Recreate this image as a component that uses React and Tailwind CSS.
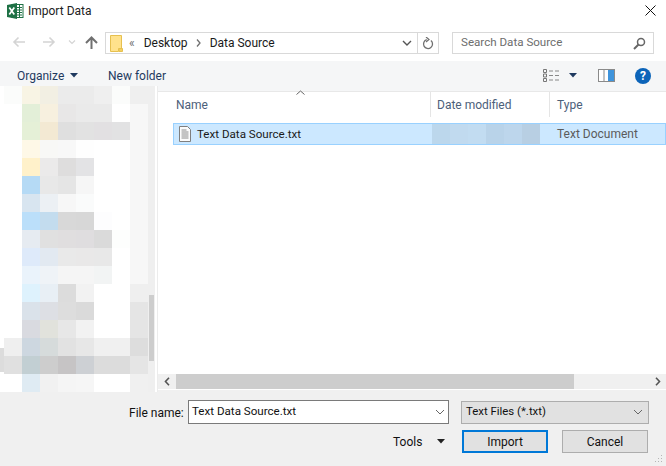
import React from "react";

const W = "#ffffff", F = "#f7f7f7";
const rows = [
  ["#fbfcfb","#f8f4e4","#f2efe3","#ebebeb","#ebebeb","#efefef","#fbfcfb","#efefef"],
  [W,"#e3efd8","#f7f0df","#e8e7e7","#eaeaea","#eaeaea",W,F],
  [W,"#e5f0d7","#f3e9d3","#dfdfdf","#e2e2e2","#e2e0e2","#e2e2e3",F],
  [W,"#fef8e7","#f8f8f6","#f8f8f8","#fefefe",W,W,F],
  [W,"#fff1ca","#ebeaea","#dedddd","#e3e3e5",W,W,F],
  [W,"#b5daf5","#e8e8e8","#e5e5e5","#f6f6f6",W,W,F],
  [W,"#d8e5f0","#ecf0f4","#f7f7f7","#fafbfb",W,W,F],
  [W,"#bbdffa","#c3dcee","#d8d8d8","#d7d7d7","#fdfdfe",W,F],
  [W,"#e6ebf1","#e0e0e0","#e0dedf","#dfdddf","#dadada","#fdfefd",F],
  [W,"#deeafa","#e2e9f1","#e9e9e9","#e9e8e8","#e8e8e8",W,F],
  [W,"#eaf3fb","#eff3f7","#f5f5f5","#f5f5f5","#f2f4f4",W,F],
  [W,"#def2fd","#e8eff5","#dcdcdc","#f2f2f2",W,W,"#efefef"],
  [W,"#dae2ea","#dddfe4","#dddddd","#dadada",W,W,"#e5e5e5"],
  [W,"#d9dae0","#e1e2dc","#e7e7e7","#f2f2f2",W,W,"#e5e5e5"],
  ["#efefef","#cdd7e0","#d6dbdb","#e2e2e2","#e7e7e7","#f0f0f0","#f0f0f0","#dddddd"],
  ["#e0e0e0","#c2cfd3","#cdcdcd","#c6c4c5","#cdd0d4","#dcdcdc","#dcdcdc","#e5e5e5"],
  [W,"#dfebf3","#f1f1f1","#f5f5f5","#f6f6f6",W,W,"#f0f0f0"],
];
const dateCells = ["#bcd7ec","#c1daef","#c2dcf1","#b9d3e9","#bdd6ec","#b8cfe3"];

const Caret = ({ className = "" }) => (
  <svg width="8" height="5" viewBox="0 0 8 5" className={className}><path d="M0 0h8L4 4.5z" fill="#1f3a5f" /></svg>
);
const Chevron = ({ color = "#666", w = 1 }) => (
  <svg width="10" height="6" viewBox="0 0 10 6"><path d="M1 1l4 4 4-4" fill="none" stroke={color} strokeWidth={w} /></svg>
);

export default function App() {
  return (
    <div className="w-[666px] h-[466px] overflow-hidden flex flex-col bg-white text-[12px] text-[#1a1a1a]" style={{ fontFamily: 'Roboto, "Open Sans", sans-serif' }}>
      {/* title bar */}
      <div className="h-[31px] flex items-start shrink-0">
        <svg width="17" height="16" viewBox="0 0 17 16" className="ml-[7px] mt-[3px]">
          <rect x="5" y="1.500" width="11" height="13" fill="#fff" stroke="#1e7145" />
          <path d="M10 4.500h5M10 7h5M10 9.500h5M10 12h5M12.500 2v12" stroke="#1e7145" strokeWidth="1" />
          <path d="M0 2l10-2v16L0 14z" fill="#1e7145" />
          <path d="M2.300 4.500l5 7M7.300 4.500l-5 7" stroke="#fff" strokeWidth="1.700" />
        </svg>
        <span className="ml-[4px] mt-[2px] text-[12px] leading-[18px] text-[#222]">Import Data</span>
        <svg width="11" height="11" viewBox="0 0 11 11" className="ml-auto mr-[10px] mt-[5px]"><path d="M.5.5l10 10M10.500.5l-10 10" stroke="#111" strokeWidth="1" /></svg>
      </div>

      {/* nav bar */}
      <div className="h-[30px] flex items-start shrink-0">
        <svg width="14" height="12" viewBox="0 0 14 12" className="ml-[12px] mt-[5px]"><path d="M13 6H2M6.500 1.500L2 6l4.500 4.500" fill="none" stroke="#d4d4d4" strokeWidth="1.600" /></svg>
        <svg width="14" height="12" viewBox="0 0 14 12" className="ml-[16px] mt-[5px]"><path d="M1 6h11M7.500 1.500L12 6l-4.500 4.500" fill="none" stroke="#d4d4d4" strokeWidth="1.600" /></svg>
        <svg width="8" height="5" viewBox="0 0 8 5" className="ml-[12px] mt-[9px]"><path d="M1 .5l3 3 3-3" fill="none" stroke="#d4d4d4" strokeWidth="1.200" /></svg>
        <svg width="13" height="13" viewBox="0 0 13 13" className="ml-[9px] mt-[5px]"><path d="M6.500 13V2M1 7l5.500-5.500L12 7" fill="none" stroke="#707070" strokeWidth="2" /></svg>
        <div className="ml-[7px] mt-[1px] w-[334px] h-[22px] border border-[#d9d9d9] flex items-center bg-white">
          <svg width="13" height="17" viewBox="0 0 13 17" className="ml-[4px]"><path d="M.5.5h11v13h-3v3H.5z" fill="#ffe28c" stroke="#e6c04f" /><path d="M9 16.500v-3h3.500v3z" fill="#f4d060" stroke="#e6c04f" /></svg>
          <span className="ml-[6px] text-[12px] text-[#707070] leading-none">«</span>
          <span className="ml-[9px] w-[43px] whitespace-nowrap text-[12px]">Desktop</span>
          <svg width="5" height="8" viewBox="0 0 5 8" className="ml-[9px]"><path d="M1 .5L4 4 1 7.500" fill="none" stroke="#707070" strokeWidth="1.300" /></svg>
          <span className="ml-[9px] text-[12px]">Data Source</span>
          <div className="ml-auto mr-[5px]"><Chevron color="#555" w={1.4} /></div>
          <div className="w-[1px] h-full bg-[#d9d9d9]" />
          <svg width="12" height="13" viewBox="0 0 12 13" className="mx-[4px]"><path d="M6 2.500A4.500 4.500 0 1 1 2.300 4.500" fill="none" stroke="#707070" strokeWidth="1.300" transform="rotate(40 6 7)" /><path d="M4 0l3 2.500-3 2.500" fill="none" stroke="#707070" strokeWidth="1.200" /></svg>
        </div>
        <div className="ml-[13px] mt-[1px] w-[202px] h-[22px] border border-[#d9d9d9] flex items-center pl-[8px] pr-[7px]">
          <span className="text-[#6d6d6d] text-[11.6px]">Search Data Source</span>
          <svg width="13" height="13" viewBox="0 0 13 13" className="ml-auto"><circle cx="8" cy="5" r="3.500" fill="none" stroke="#666" strokeWidth="1.500" /><path d="M5.500 7.500L1 12" stroke="#666" strokeWidth="2" /></svg>
        </div>
      </div>

      {/* toolbar */}
      <div className="h-[31px] shrink-0 bg-[#f5f6f7] border-b border-[#e8e8e8] flex items-center pb-[1px]">
        <span className="ml-[17px] w-[47px] text-[#1f3a5f]">Organize</span>
        <Caret className="ml-[6px]" />
        <span className="ml-[30px] text-[#1f3a5f]">New folder</span>
        <svg width="17" height="13" viewBox="0 0 17 13" className="ml-auto">
          <path d="M.5.5h3v3h-3zM.5 5h3v3h-3zM.5 9.500h3v3h-3z" fill="none" stroke="#777" />
          <path d="M6 2h4M12 2h4M6 6.500h4M12 6.500h4M6 11h4M12 11h4" stroke="#888" />
        </svg>
        <Caret className="ml-[9px]" />
        <svg width="17" height="13" viewBox="0 0 17 13" className="ml-[21px]">
          <rect x=".5" y=".5" width="16" height="12" fill="#fff" stroke="#8a8a8a" />
          <rect x="5.500" y="1" width="1" height="11" fill="#8a8a8a" />
          <rect x="10" y="1" width="6" height="11" fill="#3f94dc" />
        </svg>
        <div className="ml-[20px] mr-[15px] w-[16px] h-[16px] rounded-full bg-[#0c64b9] flex items-center justify-center text-white text-[12px] font-bold leading-none">?</div>
      </div>

      {/* main */}
      <div className="flex-1 flex min-h-0">
        <div className="relative z-10 -mt-[6px] w-[158px] h-[306px] flex shrink-0 bg-white">
          <div className="absolute left-0 top-[262px] w-[4px] h-[24px] bg-[#dcdcdc]" />
          <div className="ml-[4px] w-[144px] grid grid-cols-[repeat(8,18px)] auto-rows-[18px]">
            {rows.flat().map((c, i) => (
              <div key={i} style={{ backgroundColor: c }} />
            ))}
          </div>
          <div className="w-[7px] bg-[#efefef] flex flex-col">
            <div className="mt-[209px] ml-[1px] w-[5px] h-[66px] bg-[#cdcdcd]" />
          </div>
          <div className="w-[2px]" />
          <div className="w-[1px] bg-[#ececec]" />
        </div>

        <div className="flex-1 min-w-0 flex flex-col relative">
          <svg width="9" height="5" viewBox="0 0 9 5" className="absolute left-[138px] top-[-2px]"><path d="M.5 4.500l4-3.500 4 3.500" fill="none" stroke="#666" /></svg>
          <div className="h-[25px] flex shrink-0 text-[#4c607a]">
            <div className="w-[273px] pl-[18px] pt-[4px] border-r border-[#e5e5e5]">Name</div>
            <div className="w-[119px] pl-[6px] pt-[4px] border-r border-[#e5e5e5]">Date modified</div>
            <div className="pl-[7px] pt-[4px]">Type</div>
          </div>
          <div className="mt-[6px] ml-[15px] h-[22px] border border-[#99d1ff] bg-[#cce8ff] flex items-stretch shrink-0">
            <svg width="12" height="16" viewBox="0 0 12 16" className="ml-[5px] mt-[2px]">
              <path d="M.5.5h8l3 3v12H.5z" fill="#fbfbfb" stroke="#7f7f7f" />
              <path d="M2.500 4h5M2.500 6h7M2.500 8h7M2.500 10h7M2.500 12h7" stroke="#8c8c8c" />
            </svg>
            <span className="ml-[6px] w-[235px] leading-[20px] text-[11.6px] text-[#1a1a1a]">Text Data Source.txt</span>
            <div className="flex">
              {dateCells.map((c, i) => (
                <div key={i} className="w-[18px]" style={{ backgroundColor: c }} />
              ))}
            </div>
            <span className="ml-[17px] leading-[20px] text-[#5b5b5b]">Text Document</span>
          </div>
          <div className="flex-1" />
          <div className="h-[15px] bg-[#f0f0f0] flex items-center shrink-0 mb-[1px]">
            <svg width="6" height="9" viewBox="0 0 6 9" className="ml-[6px]"><path d="M5 .8L1.500 4.500 5 8.200" fill="none" stroke="#555" strokeWidth="1.600" /></svg>
            <div className="ml-[6px] w-[398px] h-full bg-[#cdcdcd]" />
            <svg width="6" height="9" viewBox="0 0 6 9" className="ml-auto mr-[5px]"><path d="M1 .8l3.500 3.700L1 8.200" fill="none" stroke="#555" strokeWidth="1.600" /></svg>
          </div>
        </div>
      </div>

      {/* bottom */}
      <div className="h-[76px] shrink-0 bg-[#f0f0f0] relative">
        <div className="flex items-center pt-[10px] h-[34px]">
          <span className="ml-[129px] w-[54px] whitespace-nowrap text-[#111] pt-[1px]">File name:</span>
          <div className="ml-[5px] w-[261px] h-[24px] bg-white border border-[#7a7a7a] flex items-center pl-[3px] pr-[3px] text-[#111]">
            <span className="text-[11.6px]">Text Data Source.txt</span>
            <div className="ml-auto"><Chevron color="#666" /></div>
          </div>
          <div className="ml-[12px] w-[188px] h-[23px] bg-[#e1e1e1] border border-[#adadad] flex items-center pl-[4px] pr-[5px] text-[#111]">
            <span className="text-[11.4px]">Text Files (*.txt)</span>
            <div className="ml-auto"><Chevron color="#666" /></div>
          </div>
        </div>
        <div className="flex items-center mt-[6px] h-[23px]">
          <span className="ml-[393px] w-[28px] text-[#111]">Tools</span>
          <svg width="8" height="5" viewBox="0 0 8 5" className="ml-[16px]"><path d="M0 0h8L4 4.500z" fill="#222" /></svg>
          <button className="ml-[17px] w-[86px] h-[23px] bg-[#e1e1e1] border-2 border-[#0078d7] text-[#111] text-[12px]">Import</button>
          <button className="ml-[14px] w-[86px] h-[23px] bg-[#e1e1e1] border border-[#adadad] text-[#111] text-[12px]">Cancel</button>
        </div>
        <svg width="9" height="9" viewBox="0 0 9 9" className="absolute right-[3px] bottom-[3px]"><path d="M7 1h1v1H7zM4 4h1v1H4zM7 4h1v1H7zM1 7h1v1H1zM4 7h1v1H4zM7 7h1v1H7z" fill="#b5b5b5" /></svg>
      </div>
    </div>
  );
}
